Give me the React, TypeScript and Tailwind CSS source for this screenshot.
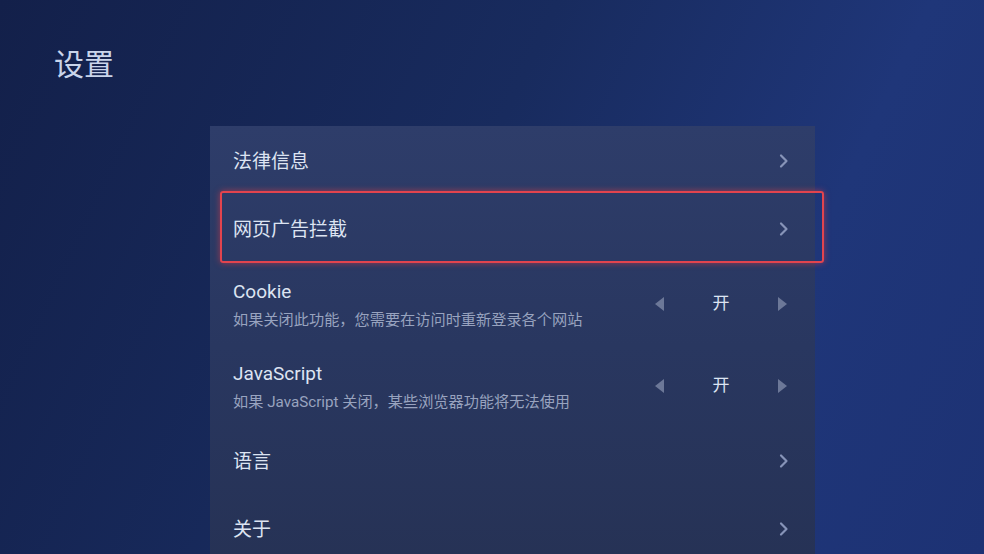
import { ReactNode } from "react";

function Chevron() {
  return (
    <svg width="12" height="16" viewBox="0 0 12 16" className="text-[#8794b8]">
      <path d="M3 2.5 L8.5 8 L3 13.5" fill="none" stroke="currentColor" strokeWidth="2.2" strokeLinecap="round" strokeLinejoin="round" />
    </svg>
  );
}

function Tri({ dir }: { dir: "l" | "r" }) {
  return (
    <svg width="11" height="16" viewBox="0 0 11 16" className="text-[#6c7898]">
      {dir === "l" ? <path d="M10 1 L1 8 L10 15 Z" fill="currentColor" /> : <path d="M1 1 L10 8 L1 15 Z" fill="currentColor" />}
    </svg>
  );
}

function Row({ title, sub, right, focused }: { title: string; sub?: string; right: ReactNode; focused?: boolean }) {
  return (
    <div className={`relative flex items-center pl-[23px] ${sub ? "h-[82px] pr-[27px]" : "h-[68px] pr-[25px]"}`}>
      <div className="flex-1 flex flex-col pt-[4px]">
        <div className="text-[19px] leading-[24px] text-[#dde4f2]">{title}</div>
        {sub && <div className="mt-[6px] text-[15.2px] leading-[20px] text-[#98a3bf]">{sub}</div>}
      </div>
      <div className="pt-[2px]">{right}</div>
      {focused && (
        <div className="absolute left-[10px] -right-[9px] -top-[3px] -bottom-[1px] rounded-[3px] border-2 border-[#e2444e] shadow-[0_0_6px_rgba(230,60,70,0.6)]" />
      )}
    </div>
  );
}

function Toggle() {
  return (
    <div className="flex items-center">
      <Tri dir="l" />
      <div className="w-[112px] text-center text-[17px] text-[#dde4f2]">开</div>
      <Tri dir="r" />
    </div>
  );
}

export default function App() {
  return (
    <div
      className="w-[984px] h-[554px] overflow-hidden bg-[linear-gradient(115deg,#13204a_0%,#182b5e_45%,#1f3679_75%,#1d3274_100%)]"
      style={{ fontFamily: "Roboto, 'Noto Sans CJK SC', sans-serif" }}
    >
      <div className="pl-[54px] pt-[45px] text-[30px] leading-[40px] text-[#c9d4ea]">设置</div>
      <div className="ml-[210px] mt-[41px] w-[605px] h-[440px] bg-[linear-gradient(180deg,#2e3d6a_0%,#293760_50%,#263255_100%)]">
        <Row title="法律信息" right={<Chevron />} />
        <Row title="网页广告拦截" right={<Chevron />} focused />
        <Row title="Cookie" sub="如果关闭此功能，您需要在访问时重新登录各个网站" right={<Toggle />} />
        <Row title="JavaScript" sub="如果 JavaScript 关闭，某些浏览器功能将无法使用" right={<Toggle />} />
        <Row title="语言" right={<Chevron />} />
        <Row title="关于" right={<Chevron />} />
      </div>
    </div>
  );
}
